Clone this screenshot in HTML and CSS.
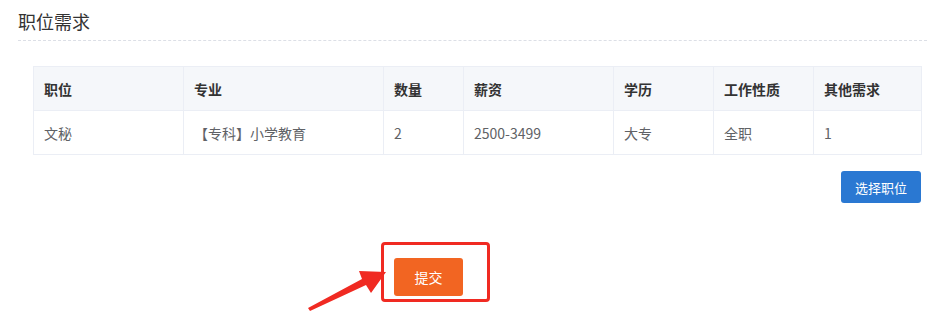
FILE: index.html
```html
<!DOCTYPE html>
<html lang="zh-CN">
<head>
  <meta charset="UTF-8">
  <title>职位需求</title>
  <link rel="stylesheet" href="styles.css">
</head>
<body>

  <div class="panel">
    <div class="panel-title">职位需求</div>

    <div class="table-wrap">
      <table class="job-table">
        <thead>
          <tr>
            <th class="c1">职位</th>
            <th class="c2">专业</th>
            <th class="c3">数量</th>
            <th class="c4">薪资</th>
            <th class="c5">学历</th>
            <th class="c6">工作性质</th>
            <th class="c7">其他需求</th>
          </tr>
        </thead>
        <tbody>
          <tr>
            <td>文秘</td>
            <td>【专科】小学教育</td>
            <td>2</td>
            <td>2500-3499</td>
            <td>大专</td>
            <td>全职</td>
            <td>1</td>
          </tr>
        </tbody>
      </table>

      <div class="table-actions">
        <button class="btn btn-blue">选择职位</button>
      </div>
    </div>

    <div class="submit-row">
      <button class="btn btn-orange">提交</button>
    </div>
  </div>

  <!-- annotation overlay -->
  <div class="mark-box"></div>
  <svg class="mark-arrow" width="90" height="50" viewBox="0 0 90 50">
    <polygon points="4,46 58,17 55,9 82,10 67,31 62,23 6,49" fill="#f02a22"/>
  </svg>

</body>
</html>
```

FILE: styles.css
```css
* {
  box-sizing: border-box;
}

body {
  margin: 0;
  font-family: "Noto Sans CJK SC", "Noto Sans", sans-serif;
  background: #fff;
  color: #606266;
  position: relative;
  width: 927px;
  height: 322px;
  overflow: hidden;
}

.panel {
  padding-left: 18px;
}

.panel-title {
  height: 41px;
  padding-top: 8px;
  font-size: 18px;
  line-height: 26px;
  color: #333;
  border-bottom: 1px dashed #dcdfe6;
}

.table-wrap {
  margin: 25px 6px 0 15px;
}

.job-table {
  width: 888px;
  border-collapse: collapse;
  table-layout: fixed;
  font-size: 14px;
}

.job-table th,
.job-table td {
  border: 1px solid #ebeef5;
  height: 44px;
  padding: 0 10px;
  text-align: left;
}

.job-table th {
  background-color: #f5f7fa;
  color: #333;
  font-weight: bold;
}

.job-table .c1 { width: 150px; }
.job-table .c2 { width: 200px; }
.job-table .c3 { width: 80px; }
.job-table .c4 { width: 150px; }
.job-table .c5 { width: 100px; }
.job-table .c6 { width: 100px; }
.job-table .c7 { width: 108px; }

.table-actions {
  display: flex;
  justify-content: flex-end;
  margin-top: 16px;
}

.btn {
  border: none;
  border-radius: 3px;
  color: #fff;
  font-family: inherit;
  cursor: pointer;
}

.btn-blue {
  width: 80px;
  height: 32px;
  font-size: 13px;
  background-color: #2a78d2;
}

.submit-row {
  margin-top: 55px;
  padding-left: 376px;
}

.btn-orange {
  width: 69px;
  height: 38px;
  font-size: 14px;
  background-color: #f26522;
}

.mark-box {
  position: absolute;
  left: 381px;
  top: 242px;
  width: 109px;
  height: 60px;
  border: 3px solid #f02a22;
  border-radius: 4px;
}

.mark-arrow {
  position: absolute;
  left: 304px;
  top: 262px;
}
```
